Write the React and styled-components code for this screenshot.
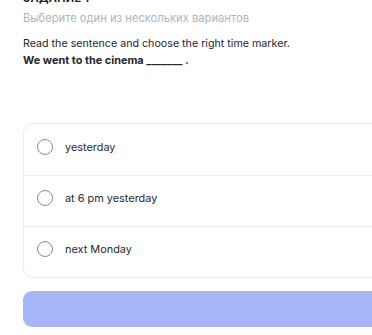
import React from 'react';
import styled, { createGlobalStyle } from 'styled-components';

const GlobalStyle = createGlobalStyle`
  html, body {
    margin: 0;
    padding: 0;
    background: #ffffff;
    overflow: hidden;
  }
  body {
    font-family: Inter, "Noto Sans", Arial, sans-serif;
    color: #222226;
  }
`;

const Page = styled.div`
  width: 420px;
  padding: 0 0 0 23px;
  margin-top: -9px;
  box-sizing: border-box;
`;

const TaskLabel = styled.div`
  font-size: 11px;
  font-weight: 700;
  letter-spacing: 0.3px;
  text-transform: uppercase;
  line-height: 14px;
  color: #1f1f24;
`;

const Hint = styled.div`
  margin-top: 5px;
  font-size: 11.2px;
  line-height: 16px;
  color: #b3b3bb;
`;

const Question = styled.div`
  margin-top: 9px;
  font-size: 10.7px;
  line-height: 17px;
  color: #26262b;
`;

const Sentence = styled.div`
  font-size: 10.9px;
  font-weight: 700;
`;

const Card = styled.div`
  margin-top: 54px;
  border: 1px solid #ececef;
  border-radius: 10px;
  display: flex;
  flex-direction: column;
`;

const Option = styled.label`
  display: flex;
  align-items: center;
  gap: 12px;
  height: 51px;
  box-sizing: border-box;
  padding: 0 0 6px 13px;
  font-size: 10.9px;
  color: #2a2a2f;
  border-top: ${p => (p.$first ? 'none' : '1px solid #ececef')};
  cursor: pointer;
`;

const Radio = styled.span`
  width: 16px;
  height: 16px;
  border: 1.5px solid #8a8a90;
  border-radius: 50%;
  box-sizing: border-box;
  flex-shrink: 0;
`;

const SubmitButton = styled.button`
  display: block;
  margin-top: 13px;
  width: 100%;
  height: 36px;
  border: none;
  border-radius: 9px;
  background: #a6b6f8;
`;

const options = ['yesterday', 'at 6 pm yesterday', 'next Monday'];

export default function App() {
  return (
    <>
      <GlobalStyle />
      <Page>
        <TaskLabel>Задание 1</TaskLabel>
        <Hint>Выберите один из нескольких вариантов</Hint>
        <Question>
          Read the sentence and choose the right time marker.
          <Sentence>We went to the cinema _______ .</Sentence>
        </Question>
        <Card>
          {options.map((o, i) => (
            <Option key={o} $first={i === 0}>
              <Radio />
              {o}
            </Option>
          ))}
        </Card>
        <SubmitButton />
      </Page>
    </>
  );
}
